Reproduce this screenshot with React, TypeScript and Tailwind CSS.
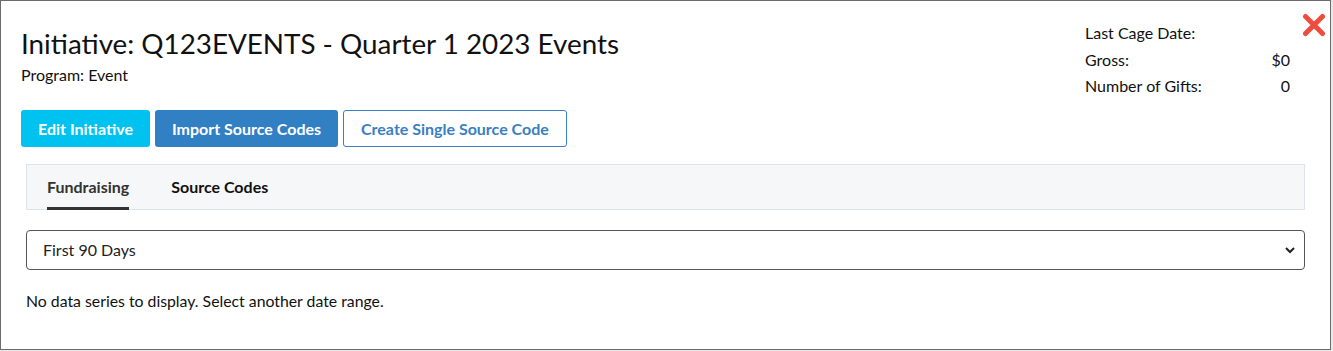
import React from "react";

export default function App() {
  return (
    <div className="w-[1333px] h-[351px] bg-[#e9e9e9] overflow-hidden" style={{ fontFamily: "Lato, 'Open Sans', sans-serif" }}>
      <div className="relative w-[1331px] h-[350px] bg-white border border-[#6b6b6b] text-[#111]">
        <button className="absolute right-[3px] top-[11px] w-[26px] h-[26px] flex items-center justify-center">
          <svg width="24" height="24" viewBox="0 0 24 24">
            <path d="M3.5 3.5 L20.5 20.5 M20.5 3.5 L3.5 20.5" stroke="#ef4b3f" strokeWidth="5" strokeLinecap="round" />
          </svg>
        </button>
        <div className="flex justify-between pl-[20px] pr-[40px] pt-[26px]">
          <div>
            <h1 className="text-[27.8px] leading-[34px] text-[#111]">Initiative: Q123EVENTS - Quarter 1 2023 Events</h1>
            <div className="text-[16px] leading-[20px] mt-[4px]">Program: Event</div>
            <div className="flex gap-[5px] mt-[25px]">
              <button className="h-[37px] px-[17px] rounded-[3px] bg-[#00c2f0] text-white text-[16px] font-bold">Edit Initiative</button>
              <button className="h-[37px] px-[17px] rounded-[3px] bg-[#3280c4] text-white text-[16px] font-bold">Import Source Codes</button>
              <button className="h-[37px] px-[17px] rounded-[3px] border border-[#3a7fc1] text-[#3a7fc1] text-[16px] font-bold">Create Single Source Code</button>
            </div>
          </div>
          <div className="w-[205px] text-[16px] leading-[26.5px] -mt-[7px]">
            <div className="flex justify-between"><span>Last Cage Date:</span><span></span></div>
            <div className="flex justify-between"><span>Gross:</span><span>$0</span></div>
            <div className="flex justify-between"><span>Number of Gifts:</span><span>0</span></div>
          </div>
        </div>
        <div className="mx-[25px] mt-[17px]">
          <div className="h-[46px] bg-[#f6f7f9] border border-[#dde3e8] flex items-stretch pl-[20px] gap-[42px] text-[16px] font-bold">
            <div className="relative flex items-center text-[#333]">
              Fundraising
              <div className="absolute left-0 right-0 bottom-[-1px] h-[3px] bg-[#333]" />
            </div>
            <div className="flex items-center text-[#111]">Source Codes</div>
          </div>
          <div className="mt-[20px] h-[40px] border border-[#555] rounded-[4px] flex items-center justify-between pl-[16px] pr-[8px] text-[16px] text-[#222]">
            <span>First 90 Days</span>
            <svg width="12" height="12" viewBox="0 0 12 12">
              <path d="M2 4 L6 8 L10 4" stroke="#222" strokeWidth="2" fill="none" />
            </svg>
          </div>
          <div className="mt-[21px] text-[15.8px] leading-[20px]">No data series to display. Select another date range.</div>
        </div>
      </div>
    </div>
  );
}
